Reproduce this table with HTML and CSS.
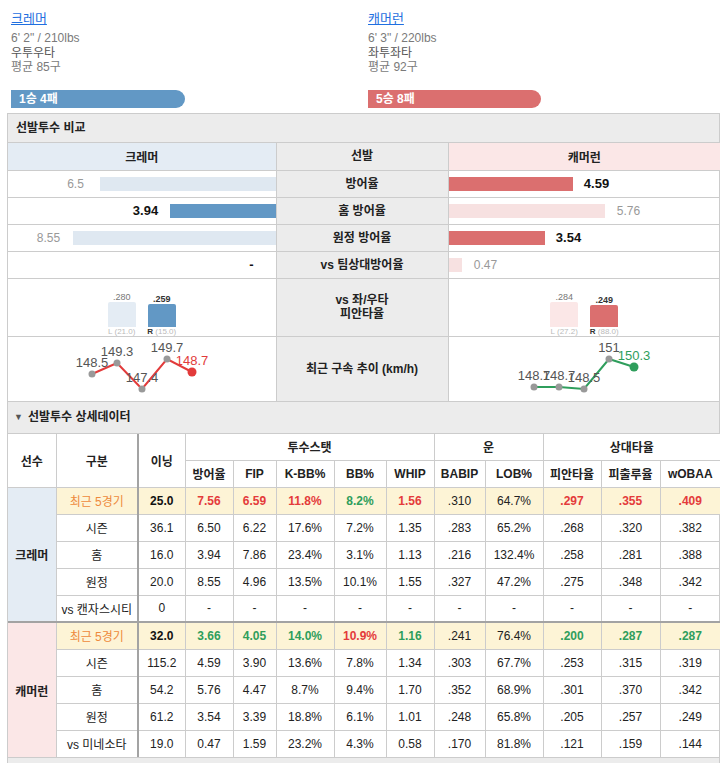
FILE: index.html
```html
<!DOCTYPE html>
<html lang="ko">
<head>
<meta charset="utf-8">
<title>선발투수 비교</title>
<link rel="stylesheet" href="styles.css">
</head>
<body>
<div class="page">
  <div class="players">
    <div class="player">
      <a class="pname" href="#">크레머</a>
      <div class="pinfo">6' 2" / 210lbs</div>
      <div class="pinfo dark">우투우타</div>
      <div class="pinfo">평균 85구</div>
      <div class="record away">1승 4패</div>
    </div>
    <div class="player">
      <a class="pname" href="#">캐머런</a>
      <div class="pinfo">6' 3" / 220lbs</div>
      <div class="pinfo dark">좌투좌타</div>
      <div class="pinfo">평균 92구</div>
      <div class="record home">5승 8패</div>
    </div>
  </div>

  <div class="box">
    <div class="box-title">선발투수 비교</div>
    <table class="cmp">
      <colgroup><col class="c-left"><col class="c-mid"><col class="c-right"></colgroup>
      <tr class="row">
        <th class="h-away">크레머</th><th class="mid">선발</th><th class="h-home">캐머런</th>
      </tr>
      <tr class="row">
        <td><div class="bw left"><span class="val muted">6.5</span><span class="bar away-light" style="width:176px"></span></div></td>
        <td class="mid">방어율</td>
        <td><div class="bw right"><span class="bar home" style="width:124px"></span><span class="val strong">4.59</span></div></td>
      </tr>
      <tr class="row">
        <td><div class="bw left"><span class="val strong">3.94</span><span class="bar away" style="width:106px"></span></div></td>
        <td class="mid">홈 방어율</td>
        <td><div class="bw right"><span class="bar home-light" style="width:156px"></span><span class="val muted">5.76</span></div></td>
      </tr>
      <tr class="row">
        <td><div class="bw left"><span class="val muted">8.55</span><span class="bar away-light" style="width:203px"></span></div></td>
        <td class="mid">원정 방어율</td>
        <td><div class="bw right"><span class="bar home" style="width:96px"></span><span class="val strong">3.54</span></div></td>
      </tr>
      <tr class="row">
        <td><div class="bw left"><span class="val strong">-</span></div></td>
        <td class="mid">vs 팀상대방어율</td>
        <td><div class="bw right"><span class="bar home-light" style="width:13px"></span><span class="val muted">0.47</span></div></td>
      </tr>
      <tr class="row-split">
        <td class="split-cell">
          <div class="split">
            <div class="sg"><span class="sv">.280</span><span class="sb away-soft" style="height:25px"></span><span class="sc">L (21.0)</span></div>
            <div class="sg"><span class="sv strong">.259</span><span class="sb away" style="height:23px"></span><span class="sc"><b>R</b> (15.0)</span></div>
          </div>
        </td>
        <td class="mid">vs 좌/우타<br>피안타율</td>
        <td class="split-cell">
          <div class="split">
            <div class="sg"><span class="sv">.284</span><span class="sb home-soft" style="height:25px"></span><span class="sc">L (27.2)</span></div>
            <div class="sg"><span class="sv strong">.249</span><span class="sb home" style="height:22px"></span><span class="sc"><b>R</b> (88.0)</span></div>
          </div>
        </td>
      </tr>
      <tr class="row-chart">
        <td>
          <svg class="chart" width="268" height="64" viewBox="0 0 268 64">
            <polyline points="84,37 109,26 134,52 159,22 184,35" fill="none" stroke="#e23b3b" stroke-width="2"/>
            <circle cx="84" cy="37" r="3.5" fill="#999"/>
            <circle cx="109" cy="26" r="3.5" fill="#999"/>
            <circle cx="134" cy="52" r="3.5" fill="#999"/>
            <circle cx="159" cy="22" r="3.5" fill="#999"/>
            <circle cx="184" cy="35" r="4.5" fill="#e23b3b"/>
            <text x="84" y="30">148.5</text>
            <text x="109" y="19">149.3</text>
            <text x="134" y="45">147.4</text>
            <text x="159" y="15">149.7</text>
            <text x="184" y="28" class="last-red">148.7</text>
          </svg>
        </td>
        <td class="mid">최근 구속 추이 (km/h)</td>
        <td>
          <svg class="chart" width="268" height="64" viewBox="0 0 268 64">
            <polyline points="84,50 109,50 134,52 159,22 184,30" fill="none" stroke="#2f9e5c" stroke-width="2"/>
            <circle cx="84" cy="50" r="3.5" fill="#999"/>
            <circle cx="109" cy="50" r="3.5" fill="#999"/>
            <circle cx="134" cy="52" r="3.5" fill="#999"/>
            <circle cx="159" cy="22" r="3.5" fill="#999"/>
            <circle cx="184" cy="30" r="4.5" fill="#2f9e5c"/>
            <text x="84" y="43">148.7</text>
            <text x="109" y="43">148.7</text>
            <text x="134" y="45">148.5</text>
            <text x="159" y="15">151</text>
            <text x="184" y="23" class="last-green">150.3</text>
          </svg>
        </td>
      </tr>
    </table>

    <div class="box-title detail-title"><span class="tri">▼</span>선발투수 상세데이터</div>
    <table class="det">
      <colgroup>
        <col style="width:48px"><col style="width:82px"><col style="width:47px">
        <col style="width:48px"><col style="width:43px"><col style="width:58px"><col style="width:52px"><col style="width:48px">
        <col style="width:51px"><col style="width:58px">
        <col style="width:58px"><col style="width:59px"><col style="width:60px">
      </colgroup>
      <thead>
        <tr class="hr1">
          <th rowspan="2">선수</th><th rowspan="2" class="sep">구분</th><th rowspan="2">이닝</th>
          <th colspan="5">투수스탯</th><th colspan="2">운</th><th colspan="3">상대타율</th>
        </tr>
        <tr class="hr2">
          <th>방어율</th><th>FIP</th><th>K-BB%</th><th>BB%</th><th>WHIP</th><th>BABIP</th><th>LOB%</th><th>피안타율</th><th>피출루율</th><th>wOBAA</th>
        </tr>
      </thead>
      <tbody>
        <tr class="recent">
          <td rowspan="5" class="pl away-bg">크레머</td>
          <td class="sep lbl">최근 5경기</td>
          <td class="b">25.0</td><td class="r">7.56</td><td class="r">6.59</td><td class="r">11.8%</td><td class="g">8.2%</td><td class="r">1.56</td>
          <td>.310</td><td>64.7%</td><td class="r">.297</td><td class="r">.355</td><td class="r">.409</td>
        </tr>
        <tr><td class="sep">시즌</td><td>36.1</td><td>6.50</td><td>6.22</td><td>17.6%</td><td>7.2%</td><td>1.35</td><td>.283</td><td>65.2%</td><td>.268</td><td>.320</td><td>.382</td></tr>
        <tr><td class="sep">홈</td><td>16.0</td><td>3.94</td><td>7.86</td><td>23.4%</td><td>3.1%</td><td>1.13</td><td>.216</td><td>132.4%</td><td>.258</td><td>.281</td><td>.388</td></tr>
        <tr><td class="sep">원정</td><td>20.0</td><td>8.55</td><td>4.96</td><td>13.5%</td><td>10.1%</td><td>1.55</td><td>.327</td><td>47.2%</td><td>.275</td><td>.348</td><td>.342</td></tr>
        <tr><td class="sep">vs 캔자스시티</td><td>0</td><td>-</td><td>-</td><td>-</td><td>-</td><td>-</td><td>-</td><td>-</td><td>-</td><td>-</td><td>-</td></tr>

        <tr class="recent divider">
          <td rowspan="5" class="pl home-bg">캐머런</td>
          <td class="sep lbl">최근 5경기</td>
          <td class="b">32.0</td><td class="g">3.66</td><td class="g">4.05</td><td class="g">14.0%</td><td class="r">10.9%</td><td class="g">1.16</td>
          <td>.241</td><td>76.4%</td><td class="g">.200</td><td class="g">.287</td><td class="g">.287</td>
        </tr>
        <tr><td class="sep">시즌</td><td>115.2</td><td>4.59</td><td>3.90</td><td>13.6%</td><td>7.8%</td><td>1.34</td><td>.303</td><td>67.7%</td><td>.253</td><td>.315</td><td>.319</td></tr>
        <tr><td class="sep">홈</td><td>54.2</td><td>5.76</td><td>4.47</td><td>8.7%</td><td>9.4%</td><td>1.70</td><td>.352</td><td>68.9%</td><td>.301</td><td>.370</td><td>.342</td></tr>
        <tr><td class="sep">원정</td><td>61.2</td><td>3.54</td><td>3.39</td><td>18.8%</td><td>6.1%</td><td>1.01</td><td>.248</td><td>65.8%</td><td>.205</td><td>.257</td><td>.249</td></tr>
        <tr><td class="sep">vs 미네소타</td><td>19.0</td><td>0.47</td><td>1.59</td><td>23.2%</td><td>4.3%</td><td>0.58</td><td>.170</td><td>81.8%</td><td>.121</td><td>.159</td><td>.144</td></tr>
      </tbody>
    </table>
    <div class="box-foot"></div>
  </div>
</div>
</body>
</html>
```

FILE: styles.css
```css
* { box-sizing: border-box; }
html, body { margin: 0; padding: 0; background: #fff; }
body {
  font-family: "Liberation Sans", "Noto Sans CJK KR", sans-serif;
  font-size: 12px;
  color: #222;
}
.page { width: 726px; padding: 0 6px 0 7px; }

/* players */
.players {
  display: grid;
  grid-template-columns: 357px 1fr;
  padding: 11px 0 0 4px;
  height: 113px;
}
.pname {
  display: inline-block;
  font-size: 13px;
  line-height: 16px;
  color: #1f6fe0;
  text-decoration: underline;
}
.pinfo { font-size: 12px; line-height: 14.5px; color: #7a7a7a; }
.pinfo.dark { color: #555; }
.pname + .pinfo { margin-top: 4px; }
.record {
  margin-top: 15.5px;
  width: 174px;
  height: 18px;
  line-height: 18px;
  padding-left: 8px;
  border-radius: 0 9px 9px 0;
  color: #fff;
  font-weight: bold;
  font-size: 12px;
}
.record.away { background: #6298c5; }
.record.home { background: #db6f6f; width: 173px; }

/* box */
.box { border: 1px solid #ccc; border-bottom: none; }
.box-title {
  height: 29px;
  line-height: 28px;
  background: #ececec;
  border-bottom: 1px solid #ccc;
  padding-left: 8px;
  font-weight: bold;
  font-size: 12px;
}
.detail-title {
  height: 33px;
  line-height: 31px;
  border-top: 1px solid #ccc;
  padding-left: 6px;
}
.tri { font-size: 9px; color: #555; margin-right: 5px; display: inline-block; vertical-align: 1px; }

/* comparison table */
table { border-collapse: collapse; table-layout: fixed; width: 100%; border-style: hidden; }
.cmp .c-left { width: 268px; }
.cmp .c-mid { width: 172px; }
.cmp .c-right { width: 272px; }
.cmp td, .cmp th { border: 1px solid #ccc; padding: 0; }
.cmp .row td, .cmp .row th { height: 27px; }
.cmp th { font-weight: bold; font-size: 12px; text-align: center; }
.h-away { background: #e4ecf4; }
.h-home { background: #fbe7e7; }
.mid { background: #ececec; text-align: center; font-weight: bold; font-size: 12px; line-height: 14px; }
.bw { display: flex; align-items: center; }
.bw.left { justify-content: flex-end; }
.bw.right { justify-content: flex-start; }
.val { width: 40px; margin: 0 4px; text-align: center; font-size: 12px; }
.val.muted { color: #999; }
.val.strong { font-weight: bold; font-size: 13px; color: #111; }
.bar { display: block; height: 14px; }
.away { background: #6298c5; }
.away-light { background: #dfe8f1; }
.away-soft { background: #e4ecf4; }
.home { background: #db6f6f; }
.home-light { background: #f7e1e1; }
.home-soft { background: #fbe7e7; }

.row-split td { height: 58px; }
.split-cell { vertical-align: bottom; }
.split { display: flex; justify-content: center; align-items: flex-end; gap: 12px; }
.sg { width: 28px; display: flex; flex-direction: column; align-items: center; }
.sv { font-size: 9px; line-height: 10px; color: #777; }
.sv.strong { font-weight: bold; color: #333; }
.sb { display: block; width: 28px; border-radius: 2px 2px 0 0; }
.sc { font-size: 8px; line-height: 9px; color: #bbb; white-space: nowrap; }
.sc b { color: #333; }

.row-chart td { height: 65px; }
.chart { display: block; margin: 0 auto; overflow: visible; }
.chart text {
  font-family: "Liberation Sans", sans-serif;
  font-size: 13px;
  fill: #555;
  text-anchor: middle;
}
.chart text.last-red { fill: #e23b3b; }
.chart text.last-green { fill: #2f9e5c; }

/* detail table */
.det th, .det td {
  border: 1px solid #ccc;
  padding: 0;
  text-align: center;
  font-size: 12px;
  white-space: nowrap;
}
.det th { font-weight: bold; background: #fff; color: #222; }
.det .hr1 th { height: 26px; }
.det .hr2 th { height: 27px; }
.det td { height: 27px; color: #222; }
.det .sep { border-right: 2px solid #a3a3a3; }
.det .pl { font-weight: bold; }
.away-bg { background: #e4ecf4; }
.home-bg { background: #fbe7e7; }
.det .recent td:not(.pl) { background: #fdf4d6; }
.det .lbl { color: #ee8a3c; }
.det .b { font-weight: bold; color: #111; }
.det .r { font-weight: bold; color: #e43b3b; }
.det .g { font-weight: bold; color: #2f9e5c; }
.det .divider td { border-top: 2px solid #a3a3a3; }

.box-foot { height: 10px; background: #ececec; border-top: 1px solid #ccc; }
```
